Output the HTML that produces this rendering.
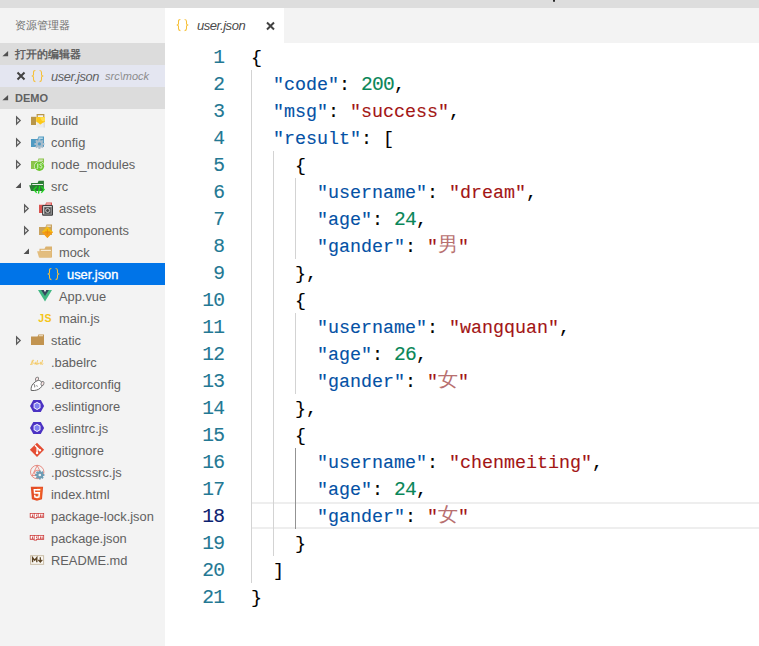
<!DOCTYPE html>
<html><head><meta charset="utf-8"><style>
*{margin:0;padding:0;box-sizing:border-box}
html,body{width:759px;height:646px;overflow:hidden;background:#fff;font-family:"Liberation Sans",sans-serif}
.abs{position:absolute}
#title{position:absolute;left:0;top:0;width:759px;height:8px;background:#dddddd}
#side{position:absolute;left:0;top:8px;width:165px;height:638px;background:#f3f3f3}
.hdr{position:absolute;left:15px;font-size:11px;color:#6f6f6f;white-space:nowrap}
.sec{position:absolute;left:0;width:165px;height:22px;background:#dcdcdc}
.sec span{position:absolute;left:15px;top:0;line-height:22px;font-size:11px;font-weight:bold;color:#616161;white-space:nowrap}
.row{position:absolute;left:0;width:165px;height:22px}
.row.sel{background:#0074e8}
.row .lbl{position:absolute;top:0;line-height:23px;font-size:12.85px;color:#616161;white-space:nowrap}
.row.sel .lbl{color:#fff;-webkit-text-stroke:0.35px #fff}
.ic,.tw{position:absolute;overflow:visible}
#tabs{position:absolute;left:165px;top:8px;width:594px;height:35px;background:#f3f3f3}
#tab{position:absolute;left:165px;top:8px;width:119px;height:35px;background:#fff}
.ln{position:absolute;left:165px;width:59.3px;text-align:right;height:27px;line-height:27px;padding-top:2px;-webkit-text-stroke:0.1px currentColor;font-family:"Liberation Mono",monospace;font-size:19.6px;letter-spacing:-0.76px;color:#237893}
.ln.act{color:#0b216f}
.cl{position:absolute;height:27px;line-height:27px;padding-top:2px;-webkit-text-stroke:0.12px currentColor;font-family:"Liberation Mono",monospace;font-size:18.33px;color:#000;white-space:pre}
.cl b{font-weight:normal}
.k{color:#0451a5} .s{color:#a31515} .n{color:#098658;font-size:19.6px;letter-spacing:-0.76px;vertical-align:top}
.g{position:absolute;width:1px}
.cj{font-style:normal;font-size:20px;line-height:0;font-weight:300;-webkit-text-stroke:0;position:relative;top:-1px;color:#b87070}
#cur{position:absolute;left:251px;top:502px;width:508px;height:27px;border-top:2px solid #eeeeee;border-bottom:2px solid #eeeeee}
</style></head><body>
<div id="title"></div>
<div class="abs" style="left:553px;top:0;width:2px;height:1.5px;background:#2a2a2a;border-radius:0 0 1px 1px"></div>
<div id="side">
</div>
<div class="hdr" style="top:19px;line-height:13px">资源管理器</div>
<div class="sec" style="top:43px"><svg class="tw" style="left:2px;top:7px" width="8" height="8" viewBox="0 0 8 8"><path d="M6.1 1V6.3H0.4z" fill="#505050"/></svg><span>打开的编辑器</span></div>
<div class="row" style="top:65px;background:#e4e6f1">
<svg class="ic" style="left:16px;top:6px" width="10" height="10" viewBox="0 0 10 10"><path d="M1.5 1.5l7 7M8.5 1.5l-7 7" stroke="#424242" stroke-width="2"/></svg>
<svg class="ic" style="left:29.5px;top:3px" width="16" height="16" viewBox="0 0 16 16"><path d="M5.4 2.4C4 2.4 3.5 2.9 3.5 4.4V6.8C3.5 7.6 3 8 1.7 8 3 8 3.5 8.4 3.5 9.2V11.6C3.5 13.1 4 13.6 5.4 13.6M9.6 2.4C11 2.4 11.5 2.9 11.5 4.4V6.8C11.5 7.6 12 8 13.3 8 12 8 11.5 8.4 11.5 9.2V11.6C11.5 13.1 11 13.6 9.6 13.6" fill="none" stroke="#f6c038" stroke-width="1.05"/></svg>
<span class="lbl" style="left:51px;font-style:italic;color:#616161;letter-spacing:-0.4px">user.json</span>
<span class="lbl" style="left:105px;font-style:italic;font-size:11px;color:#8c8c8c">src\mock</span>
</div>
<div class="sec" style="top:87px"><svg class="tw" style="left:2px;top:7px" width="8" height="8" viewBox="0 0 8 8"><path d="M6.1 1V6.3H0.4z" fill="#505050"/></svg><span>DEMO</span></div>
<div class="row" style="top:109px"><svg class="tw" style="left:15px;top:7px" width="7" height="9" viewBox="0 0 7 9"><path d="M1.6 1L5.2 4.5 1.6 8z" fill="none" stroke="#5a5a5a" stroke-width="1.25"/></svg><svg class="ic" style="left:30px;top:3px" width="16" height="16" viewBox="0 0 16 16"><path d="M1 4.8h5v8.2H1z" fill="#b8964a"/><path d="M7.2 2.6h6.6v3H7.2z" fill="none" stroke="#b8964a" stroke-width="1.2"/><path d="M6.5 7.5h8.5v8H6.5z" fill="#ebebeb"/><path d="M14.2 7.5v8" stroke="#cfcfcf" stroke-width=".8"/><path d="M6.2 5h8.8v4.5c-.8 1-1.8 1-2.6 1.6-.8.5-1.2 1.3-2 1.3s-1.4-1.3-2.2-1.6c-.8-.3-1.4-.5-2-1.3z" fill="#fdc818"/><path d="M10 5.3h5v3.5c-1 .6-2 .4-3 .3z" fill="#ffe45c" opacity=".8"/></svg><span class="lbl" style="left:51px">build</span></div><div class="row" style="top:131px"><svg class="tw" style="left:15px;top:7px" width="7" height="9" viewBox="0 0 7 9"><path d="M1.6 1L5.2 4.5 1.6 8z" fill="none" stroke="#5a5a5a" stroke-width="1.25"/></svg><svg class="ic" style="left:30px;top:3px" width="16" height="16" viewBox="0 0 16 16"><path d="M1 5h6.5l1-2.5h5.5V13H1z" fill="#4f9ac2"/><path d="M8.6 3.6h4.2v1.1H8.6z" fill="#fff" opacity=".85"/><g transform="translate(9.4 9.9)" fill="#a7bccb"><circle r="3.6"/><path d="M-1 -5h2v2h-2zM-1 3h2v2h-2zM-5 -1h2v2h-2zM3 -1h2v2h-2z"/><path d="M-1 -5h2v2h-2zM-1 3h2v2h-2zM-5 -1h2v2h-2zM3 -1h2v2h-2z" transform="rotate(45)"/><circle r="1.6" fill="#4f9ac2"/></g></svg><span class="lbl" style="left:51px">config</span></div><div class="row" style="top:153px"><svg class="tw" style="left:15px;top:7px" width="7" height="9" viewBox="0 0 7 9"><path d="M1.6 1L5.2 4.5 1.6 8z" fill="none" stroke="#5a5a5a" stroke-width="1.25"/></svg><svg class="ic" style="left:30px;top:3px" width="16" height="16" viewBox="0 0 16 16"><path d="M1 5h6.5l1-2.5h5.5V13H1z" fill="#8bc34a"/><path d="M8.6 3.6h4.2v1.1H8.6z" fill="#fff" opacity=".85"/><circle cx="9.4" cy="10.3" r="5.2" fill="#f3f3f3"/><circle cx="9.4" cy="10.3" r="4.7" fill="#6cc72e"/><path d="M7.8 7.6v3.8c0 1-.5 1.3-1.1 1.2M12.3 8.3c-.4-.6-1.6-.8-2.2-.2-.6.6 0 1.3.8 1.6.9.3 1.5.9 1.1 1.7-.4.8-1.8.8-2.4 0" fill="none" stroke="#eaf7df" stroke-width="1"/></svg><span class="lbl" style="left:51px">node_modules</span></div><div class="row" style="top:175px"><svg class="tw" style="left:15px;top:7px" width="8" height="8" viewBox="0 0 8 8"><path d="M6 0.6V5.9H0.6z" fill="#505050"/></svg><svg class="ic" style="left:30px;top:3px" width="16" height="16" viewBox="0 0 16 16"><path d="M1.1 5h6.5l1-2.2h5.3V13H1.1z" fill="#2c7d35"/><path d="M2.2 6h10.8v1H2.2z" fill="#e9f1e9"/><path d="M-.8 7.2h13.8L12.4 13H1z" fill="#2c7d35"/><path d="M6.7 8.5L3.9 11.6l2.8 3.1M11.3 8.5l2.8 3.1-2.8 3.1M9.6 7.9L8.5 15.6" fill="none" stroke="#1fd51f" stroke-width="1.3"/></svg><span class="lbl" style="left:51px">src</span></div><div class="row" style="top:197px"><svg class="tw" style="left:23px;top:7px" width="7" height="9" viewBox="0 0 7 9"><path d="M1.6 1L5.2 4.5 1.6 8z" fill="none" stroke="#5a5a5a" stroke-width="1.25"/></svg><svg class="ic" style="left:38px;top:3px" width="16" height="16" viewBox="0 0 16 16"><path d="M1 4.8h6.2l1-2.3H14V13H1z" fill="#d9534f"/><path d="M8.3 3.5h4.6v1H8.3z" fill="#fff" opacity=".8"/><rect x="4.1" y="5" width="10.9" height="10.7" rx="1.2" fill="#3d3d3d"/><rect x="5.1" y="6" width="8.9" height="8.7" fill="#8a8a8a"/><path d="M5.6 14V6.5h8" fill="none" stroke="#dcdcdc" stroke-width=".9"/><rect x="6.6" y="7.5" width="6" height="6" fill="#4a4a4a"/><circle cx="9.6" cy="10.5" r="2" fill="none" stroke="#e0e0e0" stroke-width=".8"/></svg><span class="lbl" style="left:59px">assets</span></div><div class="row" style="top:219px"><svg class="tw" style="left:23px;top:7px" width="7" height="9" viewBox="0 0 7 9"><path d="M1.6 1L5.2 4.5 1.6 8z" fill="none" stroke="#5a5a5a" stroke-width="1.25"/></svg><svg class="ic" style="left:38px;top:3px" width="16" height="16" viewBox="0 0 16 16"><path d="M1 5h6.5l1-2.5h5.5V13H1z" fill="#c9a25c"/><path d="M8.6 3.6h4.2v1.1H8.6z" fill="#fff" opacity=".85"/><path d="M9.4 4.4L15 9.9l-5.6 6-5.5-6z" fill="#f5bd12"/><path d="M3.9 9.9H15l-5.6 6z" fill="#f49a17"/><path d="M9.4 7.2v5.4M6.9 9.9h5" stroke="#e88a10" stroke-width=".9"/></svg><span class="lbl" style="left:59px">components</span></div><div class="row" style="top:241px"><svg class="tw" style="left:23px;top:7px" width="8" height="8" viewBox="0 0 8 8"><path d="M6 0.6V5.9H0.6z" fill="#505050"/></svg><svg class="ic" style="left:38px;top:3px" width="16" height="16" viewBox="0 0 16 16"><path d="M1.5 4.7h5l1.2-2.1h6.3v10.9H1.5z" fill="#dbb26f"/><path d="M2.7 5.8h10.2v1.2H2.7z" fill="#f7ecd9"/><path d="M-.9 7.2h14.9l-1 6.3H1z" fill="#e3bd7e"/></svg><span class="lbl" style="left:59px">mock</span></div><div class="row sel" style="top:263px"><svg class="ic" style="left:46px;top:3px" width="16" height="16" viewBox="0 0 16 16"><path d="M5.4 2.4C4 2.4 3.5 2.9 3.5 4.4V6.8C3.5 7.6 3 8 1.7 8 3 8 3.5 8.4 3.5 9.2V11.6C3.5 13.1 4 13.6 5.4 13.6M9.6 2.4C11 2.4 11.5 2.9 11.5 4.4V6.8C11.5 7.6 12 8 13.3 8 12 8 11.5 8.4 11.5 9.2V11.6C11.5 13.1 11 13.6 9.6 13.6" fill="none" stroke="#f6c038" stroke-width="1.05"/></svg><span class="lbl" style="left:67px">user.json</span></div><div class="row" style="top:285px"><svg class="ic" style="left:38px;top:3px" width="16" height="16" viewBox="0 0 16 16"><path d="M0 2h14L7 13.6z" fill="#41b883"/><path d="M3.1 2h7.8L7 7.9z" fill="#35495e"/><path d="M5.8 2h2.4L7 4.2z" fill="#f3f3f3"/></svg><span class="lbl" style="left:59px">App.vue</span></div><div class="row" style="top:307px"><svg class="ic" style="left:38px;top:3px" width="16" height="16" viewBox="0 0 16 16"><text x="7" y="12" text-anchor="middle" font-family="Liberation Sans" font-weight="bold" font-size="10.5" fill="#f5c518" letter-spacing=".3">JS</text></svg><span class="lbl" style="left:59px">main.js</span></div><div class="row" style="top:329px"><svg class="tw" style="left:15px;top:7px" width="7" height="9" viewBox="0 0 7 9"><path d="M1.6 1L5.2 4.5 1.6 8z" fill="none" stroke="#5a5a5a" stroke-width="1.25"/></svg><svg class="ic" style="left:30px;top:3px" width="16" height="16" viewBox="0 0 16 16"><path d="M1 4.5h6.6l.8-2.1H14V13H1z" fill="#c29450"/><path d="M8.8 3.3h4.2v.9H8.8z" fill="#f7ecd9"/></svg><span class="lbl" style="left:51px">static</span></div><div class="row" style="top:351px"><svg class="ic" style="left:30px;top:3px" width="16" height="16" viewBox="0 0 16 16"><path d="M.5 10.5c1-.3 1.2-2.5 1.8-4 .3-.8 1.3-.8 1.3 0 0 .8-1 1.2-1.5 1.5 1 0 1.3.7 1 1.5-.3.8-1.3 1-2.6 1M4.6 8.8c.6-.8 1.4-.6 1.3.3-.1.8-.7 1.3-1.1 1.1-.4-.3 0-1.2.6-.9.3.3.3 1 .9.8M7.6 6.2c-.4 1.5-.8 3-1 4.2.5-.9 1.3-1.6 1.8-1.2.5.5-.3 1.5-1 1.3M10 9.3c.8 0 1.4-.5 1.1-.9-.4-.4-1.3.2-1.3 1 0 .8 1 .9 1.7.3M12.6 6c-.4 1.5-.9 3.2-.9 4.3.3.4.9 0 1.6-.6" fill="none" stroke="#f5c24a" stroke-width=".8"/></svg><span class="lbl" style="left:51px">.babelrc</span></div><div class="row" style="top:373px"><svg class="ic" style="left:30px;top:3px" width="16" height="16" viewBox="0 0 16 16"><path d="M1.2 14.5c-.4-2.5.3-5 2-6.8L6.3 5c1.2-1 3.2-.8 4.5.2l1.3 1.3c.6 1.3.3 3-.6 4.2-1.7 2.4-4.2 3.5-7.3 3.8z" fill="#fff" stroke="#666" stroke-width="1"/><path d="M3.7 8c.8.6 1.2 1.8 1 3.3M6.5 9.3c.5.3.8.8.8 1.3" fill="none" stroke="#666" stroke-width="1"/><ellipse cx="7" cy="3" rx="1.4" ry="2" transform="rotate(25 7 3)" fill="#fde7e7" stroke="#777" stroke-width=".9"/><ellipse cx="12.5" cy="7.5" rx="1.4" ry="2" transform="rotate(25 12.5 7.5)" fill="#fde7e7" stroke="#777" stroke-width=".9"/></svg><span class="lbl" style="left:51px">.editorconfig</span></div><div class="row" style="top:395px"><svg class="ic" style="left:30px;top:3px" width="16" height="16" viewBox="0 0 16 16"><path d="M3.3 1.9h7.5L14.1 8l-3.3 6H3.3L0 8z" fill="#4b32c3"/><path d="M7.05 3.9l3.4 1.95v4.1l-3.4 2.1-3.4-2.1V5.85z" fill="#fff"/><path d="M7.05 4.9l2.55 1.45v3.2L7.05 11 4.5 9.55v-3.2z" fill="#8080f2"/></svg><span class="lbl" style="left:51px">.eslintignore</span></div><div class="row" style="top:417px"><svg class="ic" style="left:30px;top:3px" width="16" height="16" viewBox="0 0 16 16"><path d="M3.3 1.9h7.5L14.1 8l-3.3 6H3.3L0 8z" fill="#4b32c3"/><path d="M7.05 3.9l3.4 1.95v4.1l-3.4 2.1-3.4-2.1V5.85z" fill="#fff"/><path d="M7.05 4.9l2.55 1.45v3.2L7.05 11 4.5 9.55v-3.2z" fill="#8080f2"/></svg><span class="lbl" style="left:51px">.eslintrc.js</span></div><div class="row" style="top:439px"><svg class="ic" style="left:30px;top:3px" width="16" height="16" viewBox="0 0 16 16"><path d="M7 .7l7.1 7.15L7 15 -.1 7.85z" fill="#e44d33"/><path d="M4.9 3.3L9.8 8.2M7.1 5.5v5.3" stroke="#fff" stroke-width="1.3"/><circle cx="7.1" cy="11" r="1.2" fill="#fff"/><circle cx="9.9" cy="8.2" r="1.2" fill="#fff"/></svg><span class="lbl" style="left:51px">.gitignore</span></div><div class="row" style="top:461px"><svg class="ic" style="left:30px;top:3px" width="16" height="16" viewBox="0 0 16 16"><circle cx="7.2" cy="8" r="6.7" fill="none" stroke="#e0584a" stroke-width=".65"/><path d="M7.2 1.6L2.2 11.5h10z" fill="none" stroke="#e0584a" stroke-width=".65"/><circle cx="7.2" cy="8.8" r="2.6" fill="none" stroke="#e0584a" stroke-width=".65"/><g transform="translate(9.8 11)" fill="#6e9cb4"><circle r="3.5"/><path d="M-.9 -4.6h1.8v1.8h-1.8zM-.9 2.8h1.8v1.8h-1.8zM-4.6 -.9h1.8v1.8h-1.8zM2.8 -.9h1.8v1.8h-1.8z"/><path d="M-.9 -4.6h1.8v1.8h-1.8zM-.9 2.8h1.8v1.8h-1.8zM-4.6 -.9h1.8v1.8h-1.8zM2.8 -.9h1.8v1.8h-1.8z" transform="rotate(45)"/><circle r="1.3" fill="#f3f3f3"/></g></svg><span class="lbl" style="left:51px">.postcssrc.js</span></div><div class="row" style="top:483px"><svg class="ic" style="left:30px;top:3px" width="16" height="16" viewBox="0 0 16 16"><path d="M.8 .7h12.3l-1.1 12.5-5.05 1.5L1.9 13.2z" fill="#e44d26"/><path d="M6.95 1.7v12l4.1-1.2.95-10.8z" fill="#f16529"/><path d="M10.4 3H3.5l.4 4.8h4.6l-.2 2.4-1.35.4-1.4-.4-.1-1.4H4l.2 2.7 2.75.8 2.7-.8.5-5.6H5.2l-.1-1.3h5.2z" fill="#fff"/></svg><span class="lbl" style="left:51px">index.html</span></div><div class="row" style="top:505px"><svg class="ic" style="left:30px;top:3px" width="16" height="16" viewBox="0 0 16 16"><g transform="translate(-.2 4.9) scale(.794)"><path fill="#cb3837" d="M0 0v6h5v1h4v-1h9v-6z"/><path fill="#fff" d="M1 1v4h2v-3h1v3h1v-4h1v5h2v-1h2v-4h1v4h2v-3h1v3h1v-3h1v3h1v-4z"/><path fill="#cb3837" d="M8 2h1v2h-1z"/></g></svg><span class="lbl" style="left:51px">package-lock.json</span></div><div class="row" style="top:527px"><svg class="ic" style="left:30px;top:3px" width="16" height="16" viewBox="0 0 16 16"><g transform="translate(-.2 4.9) scale(.794)"><path fill="#cb3837" d="M0 0v6h5v1h4v-1h9v-6z"/><path fill="#fff" d="M1 1v4h2v-3h1v3h1v-4h1v5h2v-1h2v-4h1v4h2v-3h1v3h1v-3h1v3h1v-4z"/><path fill="#cb3837" d="M8 2h1v2h-1z"/></g></svg><span class="lbl" style="left:51px">package.json</span></div><div class="row" style="top:549px"><svg class="ic" style="left:30px;top:3px" width="16" height="16" viewBox="0 0 16 16"><rect x=".6" y="3.7" width="13" height="8.6" fill="#fbf8f3" stroke="#c9bca5" stroke-width="1"/><path d="M2.6 10.3V5.7l2.1 2.4 2.1-2.4v4.6" stroke="#5c4425" stroke-width="1.4" fill="none"/><path d="M10.3 5.3v4.6M8.3 7.9l2 2.1 2-2.1" stroke="#5c4425" stroke-width="1.3" fill="none"/></svg><span class="lbl" style="left:51px">README.md</span></div>
<div id="tabs"></div>
<div id="tab">
<svg class="ic" style="left:10px;top:9px" width="16" height="16" viewBox="0 0 16 16"><path d="M5.4 2.4C4 2.4 3.5 2.9 3.5 4.4V6.8C3.5 7.6 3 8 1.7 8 3 8 3.5 8.4 3.5 9.2V11.6C3.5 13.1 4 13.6 5.4 13.6M9.6 2.4C11 2.4 11.5 2.9 11.5 4.4V6.8C11.5 7.6 12 8 13.3 8 12 8 11.5 8.4 11.5 9.2V11.6C11.5 13.1 11 13.6 9.6 13.6" fill="none" stroke="#f6c038" stroke-width="1.05"/></svg>
<span class="abs" style="left:32px;top:0;line-height:36px;font-size:13px;font-style:italic;color:#4a4a4a;letter-spacing:-0.45px">user.json</span>
<svg class="abs" style="left:100px;top:13px" width="11" height="10" viewBox="0 0 11 10"><path d="M2 1.5l7 7M9 1.5l-7 7" stroke="#424242" stroke-width="2"/></svg>
</div>
<div id="cur"></div>
<div class="g" style="left:251px;top:70px;height:513px;background:#d3d3d3"></div><div class="g" style="left:273px;top:151px;height:405px;background:#d3d3d3"></div><div class="g" style="left:295px;top:178px;height:81px;background:#d3d3d3"></div><div class="g" style="left:295px;top:313px;height:81px;background:#d3d3d3"></div><div class="g" style="left:295px;top:448px;height:81px;background:#939393"></div>
<div class="ln" style="top:43px">1</div><div class="cl" style="top:43px;left:251px"><b class="p">{</b></div><div class="ln" style="top:70px">2</div><div class="cl" style="top:70px;left:273px"><b class="k">"code"</b>: <b class="n">200</b>,</div><div class="ln" style="top:97px">3</div><div class="cl" style="top:97px;left:273px"><b class="k">"msg"</b>: <b class="s">"success"</b>,</div><div class="ln" style="top:124px">4</div><div class="cl" style="top:124px;left:273px"><b class="k">"result"</b>: [</div><div class="ln" style="top:151px">5</div><div class="cl" style="top:151px;left:295px">{</div><div class="ln" style="top:178px">6</div><div class="cl" style="top:178px;left:317px"><b class="k">"username"</b>: <b class="s">"dream"</b>,</div><div class="ln" style="top:205px">7</div><div class="cl" style="top:205px;left:317px"><b class="k">"age"</b>: <b class="n">24</b>,</div><div class="ln" style="top:232px">8</div><div class="cl" style="top:232px;left:317px"><b class="k">"gander"</b>: <b class="s">"<i class="cj">男</i>"</b></div><div class="ln" style="top:259px">9</div><div class="cl" style="top:259px;left:295px">},</div><div class="ln" style="top:286px">10</div><div class="cl" style="top:286px;left:295px">{</div><div class="ln" style="top:313px">11</div><div class="cl" style="top:313px;left:317px"><b class="k">"username"</b>: <b class="s">"wangquan"</b>,</div><div class="ln" style="top:340px">12</div><div class="cl" style="top:340px;left:317px"><b class="k">"age"</b>: <b class="n">26</b>,</div><div class="ln" style="top:367px">13</div><div class="cl" style="top:367px;left:317px"><b class="k">"gander"</b>: <b class="s">"<i class="cj">女</i>"</b></div><div class="ln" style="top:394px">14</div><div class="cl" style="top:394px;left:295px">},</div><div class="ln" style="top:421px">15</div><div class="cl" style="top:421px;left:295px">{</div><div class="ln" style="top:448px">16</div><div class="cl" style="top:448px;left:317px"><b class="k">"username"</b>: <b class="s">"chenmeiting"</b>,</div><div class="ln" style="top:475px">17</div><div class="cl" style="top:475px;left:317px"><b class="k">"age"</b>: <b class="n">24</b>,</div><div class="ln act" style="top:502px">18</div><div class="cl" style="top:502px;left:317px"><b class="k">"gander"</b>: <b class="s">"<i class="cj">女</i>"</b></div><div class="ln" style="top:529px">19</div><div class="cl" style="top:529px;left:295px">}</div><div class="ln" style="top:556px">20</div><div class="cl" style="top:556px;left:273px">]</div><div class="ln" style="top:583px">21</div><div class="cl" style="top:583px;left:251px">}</div>
</body></html>
